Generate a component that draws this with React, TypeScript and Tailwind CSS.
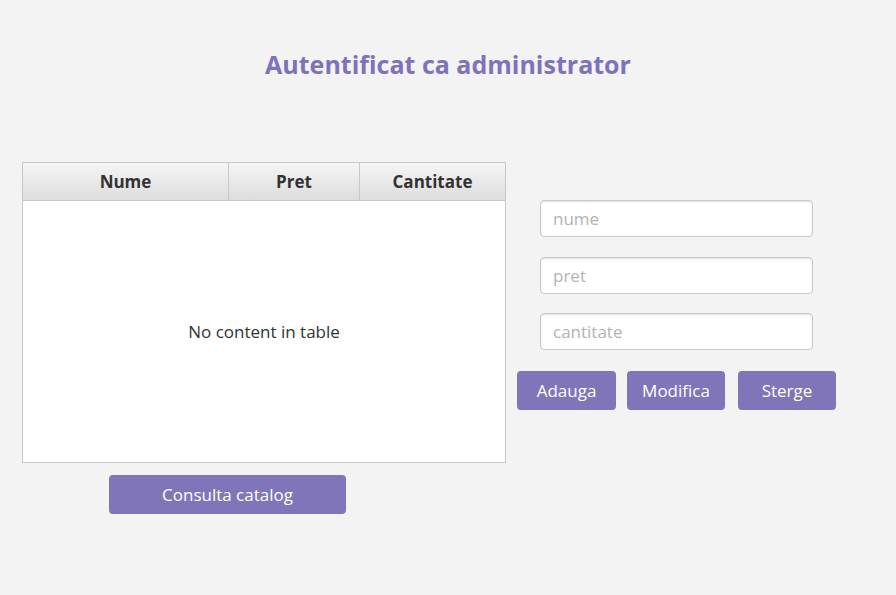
export default function App() {
  const font = { fontFamily: '"Open Sans", "Noto Sans", sans-serif' };
  return (
    <div className="min-h-[595px] w-[896px] bg-[#f3f3f3]" style={font}>
      <h1 className="pt-[46px] text-center text-[25px] font-bold leading-[36px] text-[#7f72b9]">
        Autentificat ca administrator
      </h1>
      <div className="mt-[80px] flex">
        {/* table + catalog */}
        <div className="ml-[22px] flex w-[484px] flex-col">
          <div className="flex h-[301px] flex-col border border-[#c8c8c8] bg-white">
            <div className="flex h-[38px] border-b border-[#c8c8c8] bg-gradient-to-b from-[#f5f5f5] to-[#dddddd] text-[17px] font-bold text-[#333333]">
              <div className="flex w-[206px] items-center justify-center border-r border-[#c8c8c8]">Nume</div>
              <div className="flex w-[131px] items-center justify-center border-r border-[#c8c8c8]">Pret</div>
              <div className="flex flex-1 items-center justify-center">Cantitate</div>
            </div>
            <div className="flex flex-1 items-center justify-center text-[17px] text-[#333333]">
              No content in table
            </div>
          </div>
          <button className="ml-[87px] mt-[12px] h-[39px] w-[237px] rounded-[4px] bg-[#8075b9] text-[17px] text-white">
            Consulta catalog
          </button>
        </div>
        {/* form */}
        <div className="ml-[11px] flex flex-col pt-[38px]">
          <div className="ml-[23px] flex flex-col">
            <input
              placeholder="nume"
              className="h-[37px] w-[273px] rounded-[4px] border border-[#c8c8c8] bg-white px-[12px] text-[17px] shadow-[inset_0_1px_2px_rgba(0,0,0,0.12)] outline-none placeholder:text-[#b3b3b3]"
            />
            <input
              placeholder="pret"
              className="mt-[20px] h-[37px] w-[273px] rounded-[4px] border border-[#c8c8c8] bg-white px-[12px] text-[17px] shadow-[inset_0_1px_2px_rgba(0,0,0,0.12)] outline-none placeholder:text-[#b3b3b3]"
            />
            <input
              placeholder="cantitate"
              className="mt-[19px] h-[37px] w-[273px] rounded-[4px] border border-[#c8c8c8] bg-white px-[12px] text-[17px] shadow-[inset_0_1px_2px_rgba(0,0,0,0.12)] outline-none placeholder:text-[#b3b3b3]"
            />
          </div>
          <div className="mt-[21px] flex">
            <button className="h-[39px] w-[99px] rounded-[4px] bg-[#8075b9] text-[17px] text-white">Adauga</button>
            <button className="ml-[11px] h-[39px] w-[98px] rounded-[4px] bg-[#8075b9] text-[17px] text-white">Modifica</button>
            <button className="ml-[13px] h-[39px] w-[98px] rounded-[4px] bg-[#8075b9] text-[17px] text-white">Sterge</button>
          </div>
        </div>
      </div>
    </div>
  );
}
